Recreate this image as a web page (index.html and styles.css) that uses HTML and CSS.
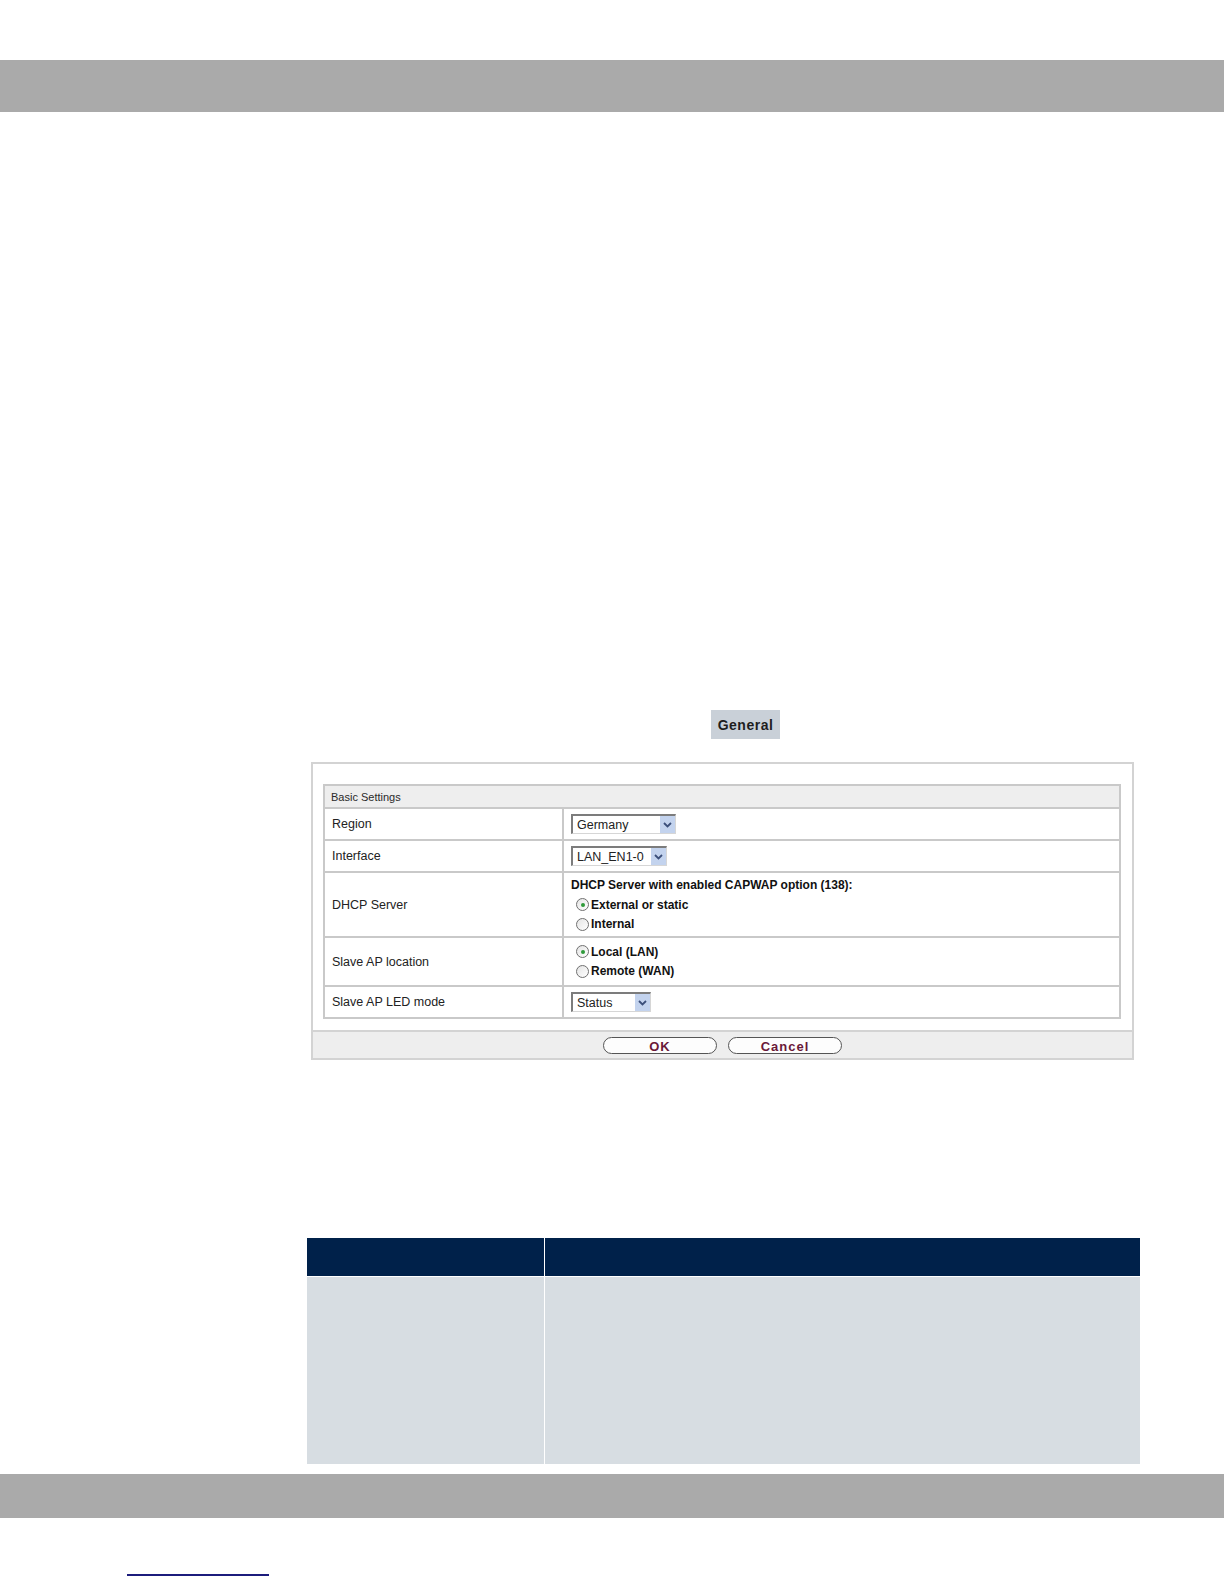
FILE: index.html
```html
<!DOCTYPE html>
<html lang="en">
<head>
<meta charset="utf-8">
<title>General</title>
<link rel="stylesheet" href="styles.css">
</head>
<body>
<div class="topbar"></div>

<div class="doc">
  <div class="tabs"><span class="tab">General</span></div>

  <div class="panel">
    <div class="panel-body">
      <div class="grid">
        <div class="row head"><div class="cell-full">Basic Settings</div></div>
        <div class="row h30">
          <div class="label">Region</div>
          <div class="value">
            <div class="select w105"><span class="sel-text">Germany</span><span class="arrow"><svg width="9" height="6" viewBox="0 0 9 6"><path d="M1 1 L4.5 4.5 L8 1" fill="none" stroke="#3b4f7a" stroke-width="1.8"/></svg></span></div>
          </div>
        </div>
        <div class="row h30">
          <div class="label">Interface</div>
          <div class="value">
            <div class="select w96"><span class="sel-text">LAN_EN1-0</span><span class="arrow"><svg width="9" height="6" viewBox="0 0 9 6"><path d="M1 1 L4.5 4.5 L8 1" fill="none" stroke="#3b4f7a" stroke-width="1.8"/></svg></span></div>
          </div>
        </div>
        <div class="row h63">
          <div class="label">DHCP Server</div>
          <div class="value stack">
            <div class="line bold">DHCP Server with enabled CAPWAP option (138):</div>
            <div class="line radio-line"><span class="radio on"></span><span class="bold">External or static</span></div>
            <div class="line radio-line"><span class="radio"></span><span class="bold">Internal</span></div>
          </div>
        </div>
        <div class="row h47">
          <div class="label">Slave AP location</div>
          <div class="value stack">
            <div class="line radio-line"><span class="radio on"></span><span class="bold">Local (LAN)</span></div>
            <div class="line radio-line"><span class="radio"></span><span class="bold">Remote (WAN)</span></div>
          </div>
        </div>
        <div class="row h30">
          <div class="label">Slave AP LED mode</div>
          <div class="value">
            <div class="select w80"><span class="sel-text">Status</span><span class="arrow"><svg width="9" height="6" viewBox="0 0 9 6"><path d="M1 1 L4.5 4.5 L8 1" fill="none" stroke="#3b4f7a" stroke-width="1.8"/></svg></span></div>
          </div>
        </div>
      </div>
    </div>
    <div class="panel-foot">
      <button class="btn">OK</button>
      <button class="btn">Cancel</button>
    </div>
  </div>

  <div class="desc">
    <div class="desc-head">
      <div class="dh-left"></div>
      <div class="dh-right"></div>
    </div>
    <div class="desc-body">
      <div class="db-left"></div>
      <div class="db-right"></div>
    </div>
  </div>
</div>

<div class="bottombar"></div>
<div class="footer"><span class="link-line"></span></div>
</body>
</html>
```
FILE: styles.css
```css
html, body {
  margin: 0;
  padding: 0;
  background: #ffffff;
  font-family: "Liberation Sans", Arial, sans-serif;
}

.topbar {
  margin-top: 60px;
  height: 52px;
  background: #aaaaaa;
}

.doc {
  margin-left: 307px;
  width: 833px;
}

.tabs {
  margin-top: 598px;
  padding-left: 404px;
  height: 29px;
}

.tab {
  display: inline-flex;
  align-items: center;
  justify-content: center;
  width: 69px;
  height: 29px;
  background: #c9d0d8;
  font-weight: bold;
  font-size: 14px;
  letter-spacing: 0.5px;
  color: #1e1e1e;
}

.panel {
  margin-top: 23px;
  margin-left: 4px;
  width: 823px;
  box-sizing: border-box;
  border: 2px solid #d3d3d3;
}

.panel-body {
  padding: 20px 11px 11px 10px;
}

.grid {
  border: 2px solid #c9c9c9;
}

.row {
  display: flex;
  border-top: 2px solid #c9c9c9;
}
.row.head {
  border-top: none;
  height: 21px;
  background: #eeeeee;
}
.cell-full {
  display: flex;
  align-items: center;
  padding-left: 6px;
  font-size: 11px;
  color: #2a2a2a;
}
.h30 { height: 30px; }
.h63 { height: 63px; }
.h47 { height: 47px; }

.label {
  width: 237px;
  flex: none;
  display: flex;
  align-items: center;
  padding-left: 7px;
  box-sizing: border-box;
  font-size: 12.5px;
  color: #222;
}

.value {
  flex: 1;
  border-left: 2px solid #c9c9c9;
  display: flex;
  align-items: center;
  padding-left: 7px;
  font-size: 12px;
  color: #111;
}

.value.stack {
  flex-direction: column;
  align-items: flex-start;
  justify-content: center;
}

.line {
  height: 19.5px;
  display: flex;
  align-items: center;
}

.bold { font-weight: bold; }

.radio-line {
  padding-left: 5px;
}

.radio {
  width: 11px;
  height: 11px;
  border: 1px solid #707070;
  border-radius: 50%;
  background: linear-gradient(135deg, #e4e4e4, #ffffff);
  margin-right: 2px;
  position: relative;
  box-sizing: content-box;
}
.radio.on::after {
  content: "";
  position: absolute;
  left: 3.5px;
  top: 3.5px;
  width: 4px;
  height: 4px;
  border-radius: 50%;
  background: #2f9a3a;
}

.select {
  height: 20px;
  box-sizing: border-box;
  border-top: 2px solid #7c7c7c;
  border-left: 2px solid #7c7c7c;
  border-right: 1px solid #d6d6d6;
  border-bottom: 1px solid #d6d6d6;
  display: flex;
  align-items: stretch;
  justify-content: space-between;
  background: #fff;
}
.w105 { width: 105px; }
.w96 { width: 96px; }
.w80 { width: 80px; }

.sel-text {
  display: flex;
  align-items: center;
  padding-left: 4px;
  font-size: 12.5px;
  color: #222;
}

.arrow {
  width: 15px;
  display: flex;
  align-items: center;
  justify-content: center;
  background: #c3d3ee;
}

.panel-foot {
  border-top: 2px solid #d3d3d3;
  background: #eeeeee;
  height: 26px;
  display: flex;
  align-items: center;
  justify-content: center;
  gap: 11px;
}

.btn {
  width: 114px;
  height: 17px;
  padding: 0;
  border: 1px solid #555;
  border-radius: 9px;
  background: #fdfdfd;
  font-family: "Liberation Sans", Arial, sans-serif;
  font-weight: bold;
  font-size: 13px;
  letter-spacing: 1px;
  color: #6a1838;
  line-height: 16px;
  padding-top: 1px;
}

.desc {
  margin-top: 178px;
}
.desc-head {
  display: flex;
  height: 38px;
  border-bottom: 1px solid #ffffff;
}
.dh-left {
  width: 237px;
  background: #00214a;
  border-right: 1px solid #ffffff;
}
.dh-right {
  flex: 1;
  background: #00214a;
}
.desc-body {
  display: flex;
  height: 187px;
}
.db-left {
  width: 237px;
  background: #d7dde2;
  border-right: 1px solid #ffffff;
}
.db-right {
  flex: 1;
  background: #d7dde2;
}

.bottombar {
  margin-top: 10px;
  height: 44px;
  background: #aaaaaa;
}

.footer {
  height: 66px;
  padding-left: 127px;
  padding-top: 56px;
  box-sizing: border-box;
}
.link-line {
  display: block;
  width: 142px;
  height: 2px;
  background: #1c1c7c;
}
```
